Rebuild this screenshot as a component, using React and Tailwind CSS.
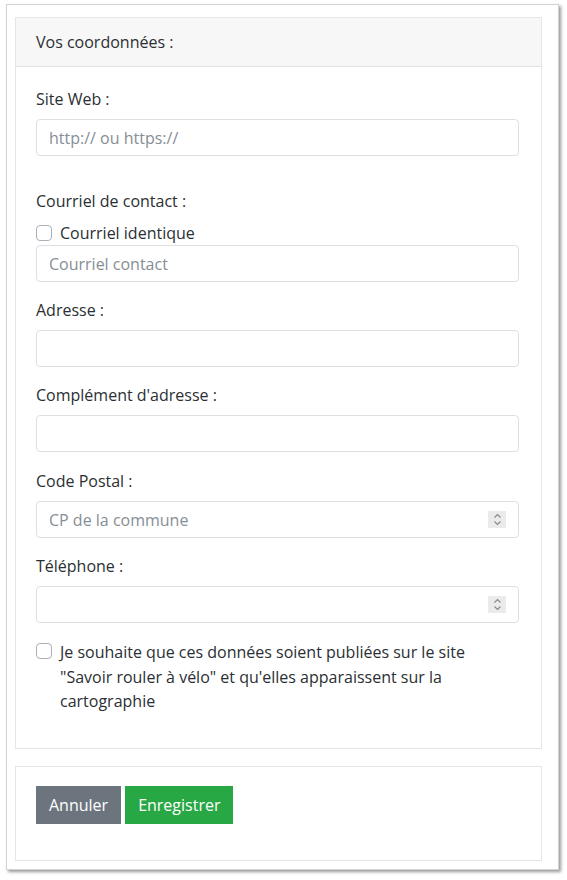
import React from 'react';

const font = { fontFamily: '"Open Sans", "Noto Sans", Arial, sans-serif' };

const Field = ({ label, placeholder, spinner, className = 'mb-4' }) => (
  <div className={className}>
    <label className="block mb-2 leading-6">{label}</label>
    <div className="relative">
      <input
        type="text"
        placeholder={placeholder}
        className="block w-full h-[37px] px-3 border border-[#dcdfe3] rounded-[4px] text-[#495057] placeholder:text-[#868e96] bg-white outline-none"
      />
      {spinner && (
        <div className="absolute right-[13px] top-[10px] w-[18px] h-[17px] bg-[#ebebeb] flex items-center justify-center">
          <svg width="9" height="13" viewBox="0 0 9 13" fill="none" stroke="#8a8a8a" strokeWidth="1.2">
            <path d="M1.5 4.5 L4.5 1.5 L7.5 4.5" />
            <path d="M1.5 8.5 L4.5 11.5 L7.5 8.5" />
          </svg>
        </div>
      )}
    </div>
  </div>
);

const Checkbox = () => (
  <span className="inline-block w-4 h-4 border border-[#a9b0b7] rounded-[4px] bg-white shrink-0" />
);

export default function App() {
  return (
    <div className="min-h-screen bg-white text-base text-[#2b2f33]" style={font}>
      <div className="ml-[6px] mt-[4px] w-[553px] pl-[8px] pt-[12px] pb-[8px] bg-white border border-[#d3d3d3] shadow-[2px_2px_3px_rgba(0,0,0,0.4)]">
        {/* Main card */}
        <div className="w-[527px] border border-[#e6e6e6]">
          <div className="h-[49px] px-5 flex items-center bg-[#f7f7f7] border-b border-[#e2e2e2]">
            Vos coordonnées :
          </div>
          <div className="pl-5 pr-[22px] pt-5 pb-[18px]">
            <Field label="Site Web :" placeholder="http:// ou https://" className="mb-[33px]" />

            <div className="mb-4">
              <label className="block mb-2 leading-6">Courriel de contact :</label>
              <div className="flex items-center gap-2 leading-6">
                <Checkbox />
                <span>Courriel identique</span>
              </div>
              <input
                type="text"
                placeholder="Courriel contact"
                className="block w-full h-[37px] px-3 border border-[#dcdfe3] rounded-[4px] placeholder:text-[#868e96] outline-none"
              />
            </div>

            <Field label="Adresse :" />
            <Field label="Complément d'adresse :" className="mb-[17px]" />
            <Field label="Code Postal :" placeholder="CP de la commune" spinner />
            <Field label="Téléphone :" spinner className="mb-[17px]" />

            <div className="flex gap-2 leading-[24.5px] mb-4">
              <span className="pt-[1px]">
                <Checkbox />
              </span>
              <span>
                Je souhaite que ces données soient publiées sur le site
                <br />
                "Savoir rouler à vélo" et qu'elles apparaissent sur la
                <br />
                cartographie
              </span>
            </div>
          </div>
        </div>

        {/* Footer card */}
        <div className="w-[527px] mt-[17px] border border-[#e6e6e6]">
          <div className="px-5 pt-[19px] pb-[36px] flex gap-1">
            <button className="h-[38px] px-3 bg-[#6c757d] text-white border border-[#6c757d]">Annuler</button>
            <button className="h-[38px] px-3 bg-[#28a745] text-white border border-[#28a745]">Enregistrer</button>
          </div>
        </div>
      </div>
    </div>
  );
}
